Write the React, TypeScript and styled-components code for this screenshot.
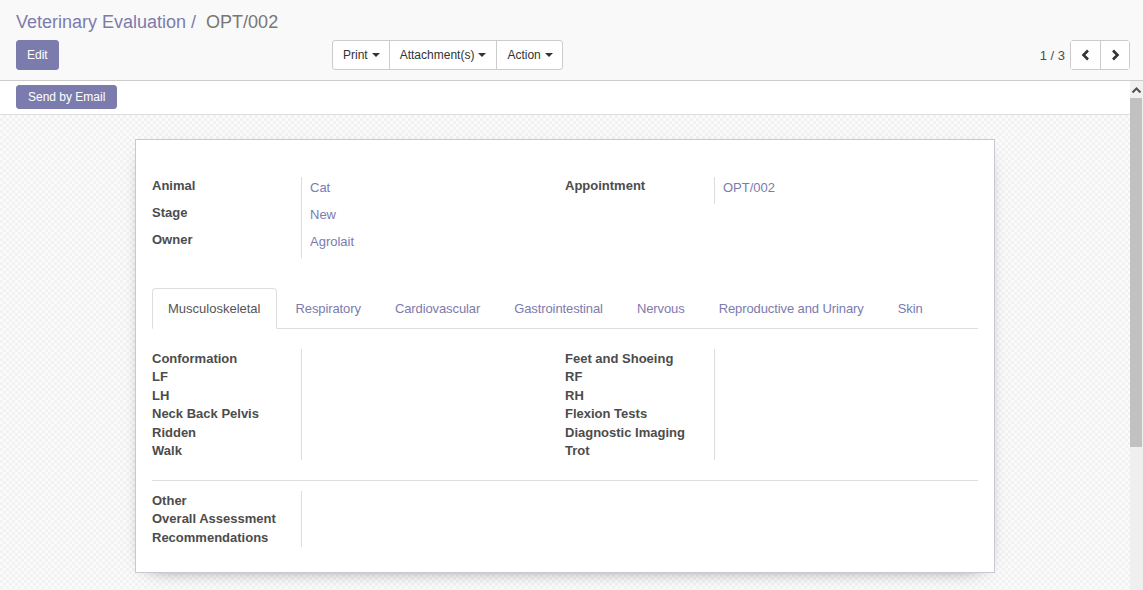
import React from "react";
import styled, { createGlobalStyle } from "styled-components";

const Global = createGlobalStyle`
  html, body { margin: 0; padding: 0; }
  body { font-family: "Liberation Sans", Arial, sans-serif; font-size: 13px; color: #4c4c4c; overflow: hidden; }
  * { box-sizing: border-box; }
`;

const Page = styled.div`
  height: 590px;
  display: flex;
  flex-direction: column;
`;

const ControlPanel = styled.div`
  background: #f9f9f9;
  border-bottom: 1px solid #cccccc;
  padding: 11px 13px 10px 16px;
  display: flex;
  flex-direction: column;
  gap: 7px;
`;

const Breadcrumb = styled.div`
  font-size: 18px;
  line-height: 22px;
  color: #777777;
  white-space: pre;
`;

const Crumb = styled.span`
  color: #7c7bad;
`;

const ButtonRow = styled.div`
  display: flex;
  align-items: center;
  height: 30px;
`;

const Left = styled.div`
  width: 316px;
  display: flex;
`;

const PrimaryButton = styled.button<{ $small?: boolean }>`
  font-family: inherit;
  font-size: 12px;
  line-height: 18px;
  padding: ${(p) => (p.$small ? "2px 11px" : "5px 10px")};
  height: ${(p) => (p.$small ? "24px" : "30px")};
  background: #7c7bad;
  color: #ffffff;
  border: 1px solid #7c7bad;
  border-radius: 3px;
  cursor: pointer;
`;

const Group = styled.div`
  display: flex;
  border: 1px solid #cccccc;
  border-radius: 3px;
  background: #ffffff;
  height: 30px;
`;

const GroupButton = styled.button`
  font-family: inherit;
  font-size: 12px;
  color: #333333;
  background: transparent;
  border: none;
  border-left: 1px solid #cccccc;
  padding: 0 10px;
  display: flex;
  align-items: center;
  gap: 4px;
  &:first-child { border-left: none; padding-right: 9px; }
  &:last-child { padding-right: 9px; }
`;

const Caret = styled.span`
  display: inline-block;
  width: 0;
  height: 0;
  border-left: 4px solid transparent;
  border-right: 4px solid transparent;
  border-top: 4px solid #333333;
`;

const Pager = styled.div`
  margin-left: auto;
  display: flex;
  align-items: center;
  gap: 5px;
`;

const PagerValue = styled.span`
  font-size: 13px;
  color: #4c4c4c;
`;

const PagerButton = styled.button`
  width: 29px;
  height: 28px;
  background: #ffffff;
  border: none;
  border-left: 1px solid #cccccc;
  display: flex;
  align-items: center;
  justify-content: center;
  padding: 0;
  &:first-child { border-left: none; }
`;

const Body = styled.div`
  flex: 1;
  display: flex;
  min-height: 0;
`;

const Main = styled.div`
  flex: 1;
  display: flex;
  flex-direction: column;
  min-width: 0;
`;

const StatusBar = styled.div`
  height: 34px;
  padding: 4px 16px 0;
  background: #ffffff;
  border-bottom: 1px solid #dddddd;
`;

const SheetBg = styled.div`
  flex: 1;
  padding-top: 24px;
  background-color: #f7f7f7;
  background-image: repeating-conic-gradient(#f2f2f2 0 25%, #fbfbfb 0 50%);
  background-size: 6px 6px;
`;

const Sheet = styled.div`
  width: 860px;
  margin: 0 auto;
  background: #ffffff;
  border: 1px solid #c8c8d3;
  box-shadow: 0 5px 20px -15px #000000;
  padding: 37px 16px 25px;
`;

const Columns = styled.div`
  display: grid;
  grid-template-columns: 413px 413px;
  justify-content: space-between;
`;

const FieldGroup = styled.div<{ $row: number }>`
  display: grid;
  grid-template-columns: 150px 1fr;
  grid-auto-rows: ${(p) => p.$row}px;
`;

const Label = styled.div`
  font-weight: bold;
  color: #4c4c4c;
  line-height: 16px;
  padding-top: 1px;
  border-right: 1px solid #dddddd;
  white-space: nowrap;
`;

const Value = styled.div`
  color: #7c7bad;
  line-height: 16px;
  padding: 3px 0 0 8px;
`;

const Tabs = styled.div`
  margin-top: 30px;
  display: flex;
  border-bottom: 1px solid #dddddd;
  height: 41px;
`;

const Tab = styled.div<{ $active?: boolean }>`
  padding: 0 15px;
  margin-right: 2px;
  display: flex;
  align-items: center;
  height: 41px;
  letter-spacing: ${(p) => (p.$active ? "0" : "-0.1px")};
  color: ${(p) => (p.$active ? "#555555" : "#7c7bad")};
  background: ${(p) => (p.$active ? "#ffffff" : "transparent")};
  border: 1px solid ${(p) => (p.$active ? "#dddddd" : "transparent")};
  border-bottom-color: ${(p) => (p.$active ? "#ffffff" : "transparent")};
  border-radius: 4px 4px 0 0;
  &:nth-child(2) { margin-left: 1px; }
`;

const TabContent = styled.div`
  padding-top: 20px;
`;

const TightLabel = styled(Label)`
  line-height: 18.5px;
  padding-top: 0.5px;
`;

const TightValue = styled.div``;

const Divider = styled.hr`
  border: none;
  border-top: 1px solid #dddddd;
  margin: 20px 0 10px;
`;

const ScrollBar = styled.div`
  width: 13px;
  background: #efefef;
  display: flex;
  flex-direction: column;
`;

const ScrollArrow = styled.div`
  height: 17px;
  background: #f1f1f1;
  display: flex;
  align-items: center;
  justify-content: center;
`;

const ScrollThumb = styled.div`
  height: 349px;
  background: #c1c1c1;
  margin: 0 1px 0 0;
`;

const Chevron = ({ dir }: { dir: "left" | "right" }) => (
  <svg width="10" height="12" viewBox="0 0 10 12">
    <path
      d={dir === "left" ? "M7 1.5 L2.5 6 L7 10.5" : "M3 1.5 L7.5 6 L3 10.5"}
      fill="none"
      stroke="#333"
      strokeWidth="2.6"
    />
  </svg>
);

const top = [
  ["Animal", "Cat"],
  ["Stage", "New"],
  ["Owner", "Agrolait"],
];

const leftFields = ["Conformation", "LF", "LH", "Neck Back Pelvis", "Ridden", "Walk"];
const rightFields = ["Feet and Shoeing", "RF", "RH", "Flexion Tests", "Diagnostic Imaging", "Trot"];
const bottomFields = ["Other", "Overall Assessment", "Recommendations"];
const tabs = [
  "Musculoskeletal",
  "Respiratory",
  "Cardiovascular",
  "Gastrointestinal",
  "Nervous",
  "Reproductive and Urinary",
  "Skin",
];

const EmptyGroup = ({ items }: { items: string[] }) => (
  <FieldGroup $row={18.5}>
    {items.map((l) => (
      <React.Fragment key={l}>
        <TightLabel>{l}</TightLabel>
        <TightValue />
      </React.Fragment>
    ))}
  </FieldGroup>
);

export default function App() {
  return (
    <Page>
      <Global />
      <ControlPanel>
        <Breadcrumb>
          <Crumb>Veterinary Evaluation / </Crumb> OPT/002
        </Breadcrumb>
        <ButtonRow>
          <Left>
            <PrimaryButton>Edit</PrimaryButton>
          </Left>
          <Group>
            <GroupButton>
              Print <Caret />
            </GroupButton>
            <GroupButton>
              Attachment(s) <Caret />
            </GroupButton>
            <GroupButton>
              Action <Caret />
            </GroupButton>
          </Group>
          <Pager>
            <PagerValue>1 / 3</PagerValue>
            <Group>
              <PagerButton>
                <Chevron dir="left" />
              </PagerButton>
              <PagerButton>
                <Chevron dir="right" />
              </PagerButton>
            </Group>
          </Pager>
        </ButtonRow>
      </ControlPanel>
      <Body>
        <Main>
          <StatusBar>
            <PrimaryButton $small>Send by Email</PrimaryButton>
          </StatusBar>
          <SheetBg>
            <Sheet>
              <Columns>
                <FieldGroup $row={27}>
                  {top.map(([l, v]) => (
                    <React.Fragment key={l}>
                      <Label>{l}</Label>
                      <Value>{v}</Value>
                    </React.Fragment>
                  ))}
                </FieldGroup>
                <FieldGroup $row={27}>
                  <Label>Appointment</Label>
                  <Value>OPT/002</Value>
                </FieldGroup>
              </Columns>
              <Tabs>
                {tabs.map((t, i) => (
                  <Tab key={t} $active={i === 0}>
                    {t}
                  </Tab>
                ))}
              </Tabs>
              <TabContent>
                <Columns>
                  <EmptyGroup items={leftFields} />
                  <EmptyGroup items={rightFields} />
                </Columns>
                <Divider />
                <Columns>
                  <EmptyGroup items={bottomFields} />
                </Columns>
              </TabContent>
            </Sheet>
          </SheetBg>
        </Main>
        <ScrollBar>
          <ScrollArrow>
            <svg width="9" height="6" viewBox="0 0 9 6">
              <path d="M0.5 5.5 L4.5 1.5 L8.5 5.5" fill="none" stroke="#505050" strokeWidth="2" />
            </svg>
          </ScrollArrow>
          <ScrollThumb />
        </ScrollBar>
      </Body>
    </Page>
  );
}
